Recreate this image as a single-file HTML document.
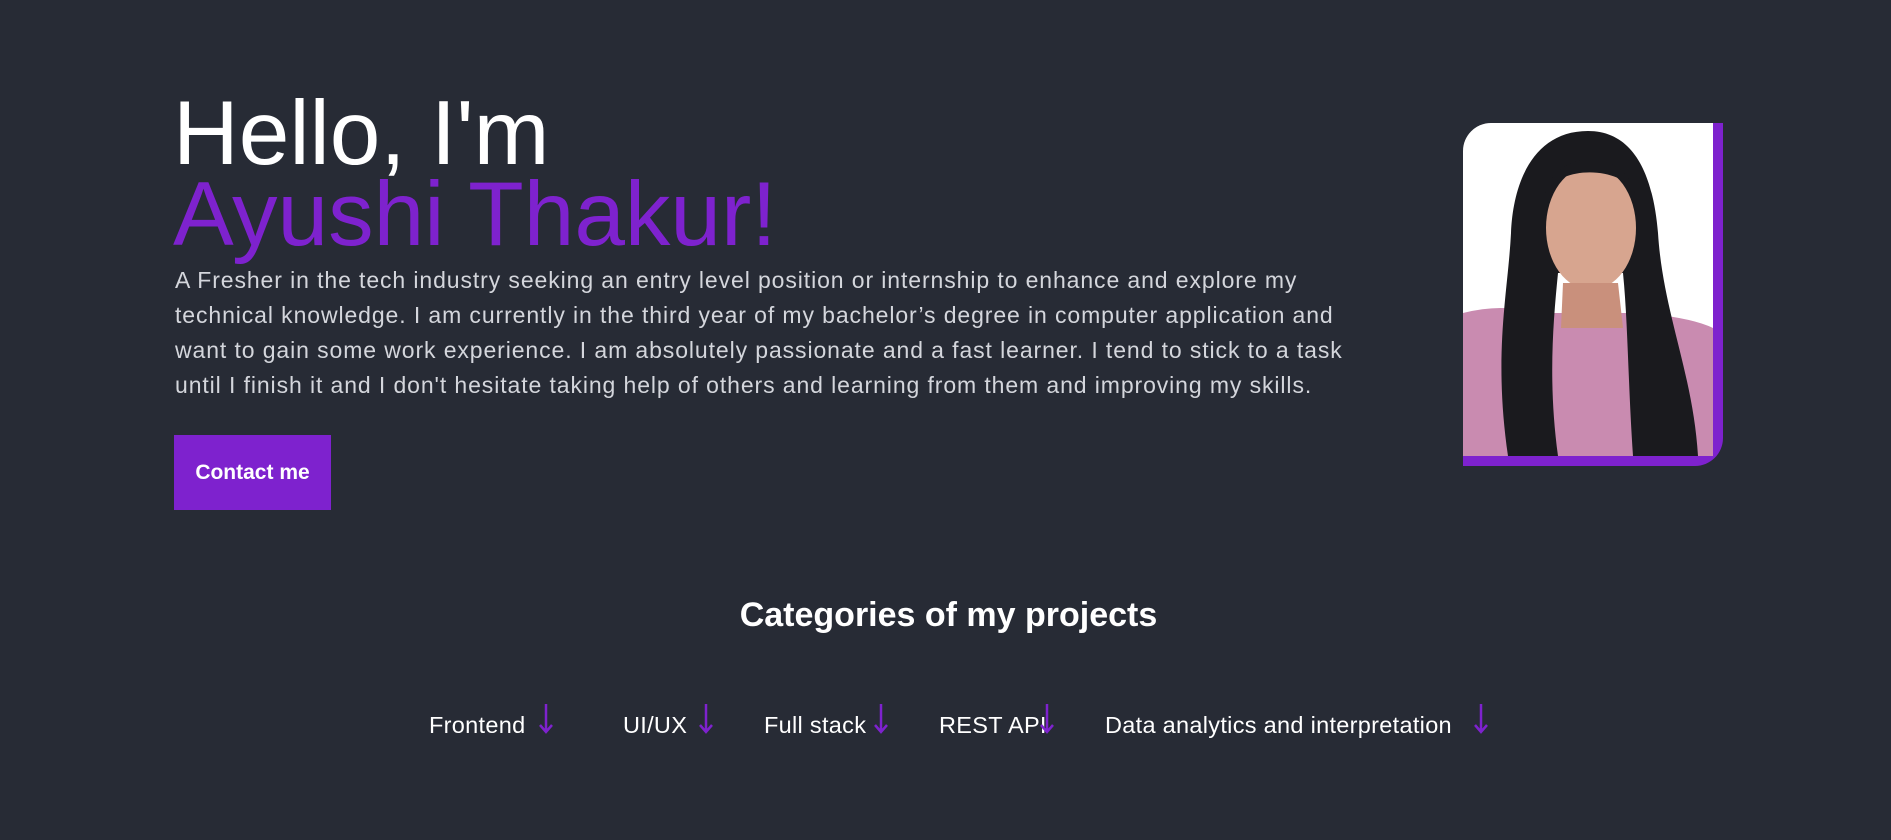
<!DOCTYPE html>
<html><head><meta charset="utf-8"><style>
html,body{margin:0;padding:0}
body{width:1891px;height:840px;background:#272b35;position:relative;overflow:hidden;font-family:"Liberation Sans",sans-serif;color:#fff}
.a{position:absolute;white-space:nowrap}
.h1{left:173px;top:84px;font-size:91px;line-height:100px;color:#fff}
.h2{left:173px;top:165px;font-size:91px;line-height:100px;color:#7e22ce}
.p{left:175px;top:263px;font-size:23px;letter-spacing:0.9px;line-height:35px;color:#d4d6dc}
.btn{left:174px;top:435px;width:157px;height:75px;background:#7e22ce;color:#fff;font-weight:bold;font-size:21px;line-height:75px;text-align:center}
.cat{top:590px;left:0;width:1897px;text-align:center;font-size:34px;font-weight:bold;line-height:50px}
.c{top:710px;font-size:23.5px;letter-spacing:0.3px;line-height:30px;color:#fff}
.ar{position:absolute;top:703px}
</style></head><body>
<div class="a h1">Hello, I'm</div>
<div class="a h2">Ayushi Thakur!</div>
<div class="a p">A Fresher in the tech industry seeking an entry level position or internship to enhance and explore my<br>technical knowledge. I am currently in the third year of my bachelor’s degree in computer application and<br>want to gain some work experience. I am absolutely passionate and a fast learner. I tend to stick to a task<br>until I finish it and I don't hesitate taking help of others and learning from them and improving my skills.</div>
<div class="a btn">Contact me</div>

<svg class="a" style="left:1463px;top:123px" width="260" height="343" viewBox="0 0 260 343">
<defs><clipPath id="cp"><path d="M28 0H250V333H0V28A28 28 0 0 1 28 0Z"/></clipPath></defs>
<path d="M250 0H260V315A28 28 0 0 1 232 343H0V333H250Z" fill="#7e22ce"/>
<g clip-path="url(#cp)">
<rect width="250" height="333" fill="#fff"/>
<path d="M0 190 Q40 180 70 190 L180 190 Q230 195 250 205 V333 H0Z" fill="#c98bb0"/>
<path d="M125 8 C70 8 50 60 48 110 C45 170 30 230 45 333 L95 333 C85 260 90 200 95 150 L160 150 C165 200 165 260 170 333 L235 333 C230 250 200 190 195 110 C190 50 170 8 125 8Z" fill="#1a1a1e"/>
<ellipse cx="128" cy="105" rx="45" ry="62" fill="#d7a58f"/>
<path d="M100 160 L155 160 L160 205 L98 205Z" fill="#c9907c"/>
<path d="M82 70 C95 25 160 25 172 70 C160 45 100 40 82 70Z" fill="#1a1a1e"/>
</g>
</svg>

<div class="a cat">Categories of my projects</div>

<div class="a c" style="left:429px">Frontend</div>
<div class="a c" style="left:623px">UI/UX</div>
<div class="a c" style="left:764px">Full stack</div>
<div class="a c" style="left:939px">REST API</div>
<div class="a c" style="left:1105px">Data analytics and interpretation</div>

<svg class="ar" style="left:538px" width="16" height="32"><path d="M8 1V29M2 22L8 29L14 22" stroke="#7e22ce" stroke-width="2.5" fill="none"/></svg>
<svg class="ar" style="left:698px" width="16" height="32"><path d="M8 1V29M2 22L8 29L14 22" stroke="#7e22ce" stroke-width="2.5" fill="none"/></svg>
<svg class="ar" style="left:873px" width="16" height="32"><path d="M8 1V29M2 22L8 29L14 22" stroke="#7e22ce" stroke-width="2.5" fill="none"/></svg>
<svg class="ar" style="left:1039px" width="16" height="32"><path d="M8 1V29M2 22L8 29L14 22" stroke="#7e22ce" stroke-width="2.5" fill="none"/></svg>
<svg class="ar" style="left:1473px" width="16" height="32"><path d="M8 1V29M2 22L8 29L14 22" stroke="#7e22ce" stroke-width="2.5" fill="none"/></svg>
</body></html>
